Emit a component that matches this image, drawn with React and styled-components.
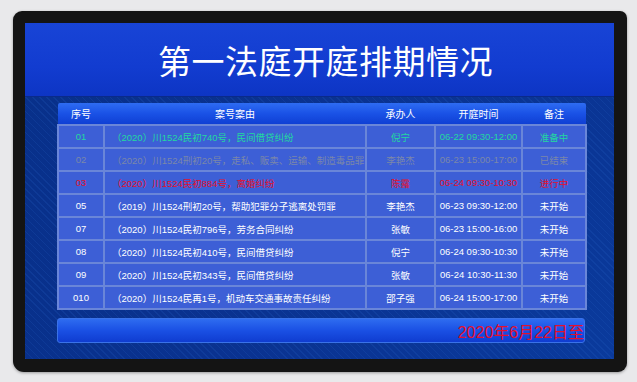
import React from "react";
import styled, { createGlobalStyle } from "styled-components";

const GlobalStyle = createGlobalStyle`
  html, body {
    margin: 0;
    padding: 0;
    background: #e9e9eb;
    font-family: "Liberation Sans", "Noto Sans CJK SC", sans-serif;
  }
`;

const Page = styled.div`
  width: 637px;
  height: 382px;
  padding: 11px 0 0 13px;
  box-sizing: border-box;
`;

const Bezel = styled.div`
  width: 614px;
  height: 361px;
  box-sizing: border-box;
  padding: 12px 13px 13px 12px;
  background: #141414;
  border-radius: 9px 7px 9px 11px;
  box-shadow: 0 1px 3px rgba(0, 0, 0, 0.35);
`;

const Screen = styled.div`
  width: 589px;
  height: 336px;
  display: flex;
  flex-direction: column;
  overflow: hidden;
`;

const TitleBand = styled.div`
  height: 73px;
  flex: none;
  display: flex;
  align-items: center;
  justify-content: center;
  padding-left: 12px;
  background: linear-gradient(180deg, #1844d6 0%, #123cd0 60%, #0d35c4 100%);
  border-bottom: 1px solid #0a2a8a;
`;

const Title = styled.h1`
  margin: 0;
  color: #ffffff;
  font-family: "Noto Sans CJK SC", sans-serif;
  font-weight: 400;
  font-size: 33px;
  letter-spacing: 0.5px;
`;

const Board = styled.div`
  flex: 1;
  padding: 6px 28px 0 32px;
  background:
    repeating-linear-gradient(45deg, rgba(40, 100, 200, 0.18) 0 1px, transparent 1px 5px),
    radial-gradient(circle at 100% 100%, #0a3a9c 0%, #0a3290 60%, #08308a 100%);
  display: flex;
  flex-direction: column;
`;

const Table = styled.table`
  width: 528px;
  border-collapse: collapse;
  table-layout: fixed;
`;

const HeadCell = styled.th`
  height: 21px;
  padding: 0;
  color: #ffffff;
  font-family: "Noto Sans CJK SC", sans-serif;
  font-weight: 400;
  font-size: 10px;
  text-align: center;
  background: linear-gradient(180deg, #2e6cf2 0%, #1a52e6 50%, #0f3fd4 100%);
  &:first-child {
    border-top-left-radius: 2px;
  }
  &:last-child {
    border-top-right-radius: 2px;
  }
`;

const colors = {
  ready: "#22d8a0",
  done: "#7b87a9",
  live: "#e4102c",
  wait: "#ffffff",
};

const Row = styled.tr`
  color: ${(p) => colors[p.$state]};
`;

const Cell = styled.td`
  height: 21px;
  padding: 0 0 0 ${(p) => (p.$left ? "7px" : "0")};
  border: 2px solid #6a86d8;
  background: #3d5fd6;
  text-align: ${(p) => (p.$left ? "left" : "center")};
  font-size: 9.5px;
  white-space: nowrap;
  overflow: hidden;
  font-family: "Liberation Sans", "Noto Sans CJK SC", sans-serif;
`;

const Footer = styled.div`
  margin-top: 8px;
  height: 25px;
  box-sizing: border-box;
  width: 528px;
  display: flex;
  align-items: center;
  justify-content: flex-end;
  border-radius: 3px;
  border: 1px solid #3a72e8;
  background: linear-gradient(180deg, #2e6cf0 0%, #1a50e4 50%, #0f3cd0 100%);
`;

const Ticker = styled.span`
  color: #e4102c;
  font-family: "Liberation Sans", "Noto Sans CJK SC", sans-serif;
  font-size: 16px;
  margin-right: 0;
`;

const rows = [
  ["01", "（2020）川1524民初740号，民间借贷纠纷", "倪宁", "06-22 09:30-12:00", "准备中", "ready"],
  ["02", "（2020）川1524刑初20号，走私、贩卖、运输、制造毒品罪", "李艳杰", "06-23 15:00-17:00", "已结束", "done"],
  ["03", "（2020）川1524民初884号，离婚纠纷", "陈露", "06-24 09:30-10:30", "进行中", "live"],
  ["05", "（2019）川1524刑初20号，帮助犯罪分子逃离处罚罪", "李艳杰", "06-23 09:30-12:00", "未开始", "wait"],
  ["07", "（2020）川1524民初796号，劳务合同纠纷", "张敏", "06-23 15:00-16:00", "未开始", "wait"],
  ["08", "（2020）川1524民初410号，民间借贷纠纷", "倪宁", "06-24 09:30-10:30", "未开始", "wait"],
  ["09", "（2020）川1524民初343号，民间借贷纠纷", "张敏", "06-24 10:30-11:30", "未开始", "wait"],
  ["010", "（2020）川1524民再1号，机动车交通事故责任纠纷", "邵子强", "06-24 15:00-17:00", "未开始", "wait"],
];

export default function App() {
  return (
    <Page>
      <GlobalStyle />
      <Bezel>
        <Screen>
          <TitleBand>
            <Title>第一法庭开庭排期情况</Title>
          </TitleBand>
          <Board>
            <Table>
              <colgroup>
                <col style={{ width: 46 }} />
                <col style={{ width: 262 }} />
                <col style={{ width: 69 }} />
                <col style={{ width: 87 }} />
                <col style={{ width: 64 }} />
              </colgroup>
              <thead>
                <tr>
                  <HeadCell>序号</HeadCell>
                  <HeadCell>案号案由</HeadCell>
                  <HeadCell>承办人</HeadCell>
                  <HeadCell>开庭时间</HeadCell>
                  <HeadCell>备注</HeadCell>
                </tr>
              </thead>
              <tbody>
                {rows.map((r) => (
                  <Row key={r[0]} $state={r[5]}>
                    <Cell>{r[0]}</Cell>
                    <Cell $left>{r[1]}</Cell>
                    <Cell>{r[2]}</Cell>
                    <Cell>{r[3]}</Cell>
                    <Cell>{r[4]}</Cell>
                  </Row>
                ))}
              </tbody>
            </Table>
            <Footer>
              <Ticker>2020年6月22日至</Ticker>
            </Footer>
          </Board>
        </Screen>
      </Bezel>
    </Page>
  );
}
